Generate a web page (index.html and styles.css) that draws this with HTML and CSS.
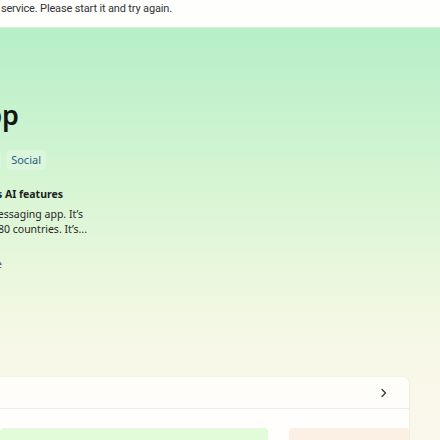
FILE: index.html
```html
<!DOCTYPE html>
<html lang="en">
<head>
<meta charset="utf-8">
<title>WhatsApp - Microsoft Store</title>
<link rel="stylesheet" href="styles.css">
</head>
<body>
  <div class="notice">
    <div class="clip notice-clip">
      <span class="notice-text">WhatsApp couldn't connect to the Microsoft Store service. Please start it and try again.</span>
    </div>
  </div>
  <main class="hero">
    <div class="info">
      <div class="clip title-box"><h1 class="title">WhatsApp</h1></div>
      <div class="clip tags-box">
        <div class="tags">
          <span class="tag">Communication</span>
          <span class="tag">Social</span>
        </div>
      </div>
      <div class="clip ai-box"><span class="ai">Includes AI features</span></div>
      <div class="desc">
        <div class="clip desc1"><span>WhatsApp from Meta is a free messaging app. It’s</span></div>
        <div class="clip desc2"><span>used by over 2B people in more than 180 countries. It’s...</span></div>
      </div>
      <div class="clip more-box"><span class="more">Show more</span></div>
    </div>
    <section class="card">
      <div class="card-head">
        <span class="card-title">Screenshots</span>
        <svg class="chev" width="10" height="10" viewBox="0 0 10 10"><path d="M3 1.5 L6.5 5 L3 8.5" fill="none" stroke="#3b3b3b" stroke-width="1.4" stroke-linecap="round" stroke-linejoin="round"/></svg>
      </div>
      <div class="card-body">
        <div class="shot shot-green"></div>
        <div class="shot shot-peach"></div>
      </div>
    </section>
  </main>
</body>
</html>
```
FILE: styles.css
```css
html, body {
  margin: 0;
  padding: 0;
}
body {
  width: 440px;
  height: 440px;
  overflow: hidden;
  background: #faf7ec;
  font-family: "Noto Sans", "Open Sans", sans-serif;
  color: #1b1b1b;
}
.clip {
  display: flex;
  justify-content: flex-end;
  white-space: nowrap;
}
.clip > * {
  flex-shrink: 0;
}
.notice {
  height: 28px;
  background: #fefffd;
  border-bottom: 1px solid #d9eedd;
  box-sizing: border-box;
}
.notice-clip {
  width: 172px;
}
.notice-text {
  font-family: Roboto, "Noto Sans", sans-serif;
  font-size: 11px;
  letter-spacing: -0.15px;
  line-height: 16px;
  color: #333;
  padding-top: 1px;
}
.hero {
  height: 412px;
  background: linear-gradient(180deg, #b6efc8 0%, #c5f2cd 18%, #d6f5d3 38%, #e9f7dc 58%, #f7f8e7 78%, #faf7ec 100%);
  display: flex;
  flex-direction: column;
}
.info {
  display: flex;
  flex-direction: column;
  padding-top: 67px;
}
.title-box {
  width: 19px;
  height: 40px;
}
.title {
  margin: 0;
  font-size: 27px;
  line-height: 40px;
  font-weight: 600;
  color: #151515;
}
.tags-box {
  width: 46px;
  margin-top: 15px;
}
.tags {
  display: flex;
  gap: 5px;
}
.tag {
  font-size: 11px;
  line-height: 16px;
  padding: 2px 5px;
  border-radius: 4px;
  background: rgba(255, 255, 255, 0.22);
  color: #1f5d86;
}
.ai-box {
  width: 63px;
  margin-top: 16px;
}
.ai {
  font-size: 10.5px;
  line-height: 16px;
  font-weight: 700;
  color: #1d1d1d;
}
.desc {
  margin-top: 5px;
  display: flex;
  flex-direction: column;
}
.desc .clip span {
  font-size: 10.5px;
  line-height: 14.5px;
  color: #262626;
}
.desc1 { width: 83px; }
.desc2 { width: 87px; }
.more-box {
  width: 2px;
  margin-top: 21px;
}
.more {
  font-size: 10.5px;
  line-height: 15px;
  color: #555;
}
.card {
  margin-top: auto;
  width: 409px;
  height: 63px;
  background: rgba(255, 255, 255, 0.72);
  border-top-right-radius: 6px;
  box-shadow: 1px 0 0 rgba(0, 0, 0, 0.04), 0 -1px 0 rgba(0, 0, 0, 0.02);
  display: flex;
  flex-direction: column;
}
.card-head {
  height: 34px;
  border-bottom: 1px solid #ecece6;
  display: flex;
  align-items: center;
  justify-content: flex-end;
  padding-right: 20px;
}
.card-title {
  display: none;
}
.chev {
  display: block;
}
.card-body {
  flex: 1;
  display: flex;
  gap: 21px;
  padding-top: 19px;
  background: rgba(255, 255, 255, 0.5);
}
.shot {
  height: 12px;
  border-radius: 4px 4px 0 0;
}
.shot-green {
  width: 268px;
  background: #e2fbd8;
}
.shot-peach {
  width: 120px;
  background: #fcefe3;
}
```
